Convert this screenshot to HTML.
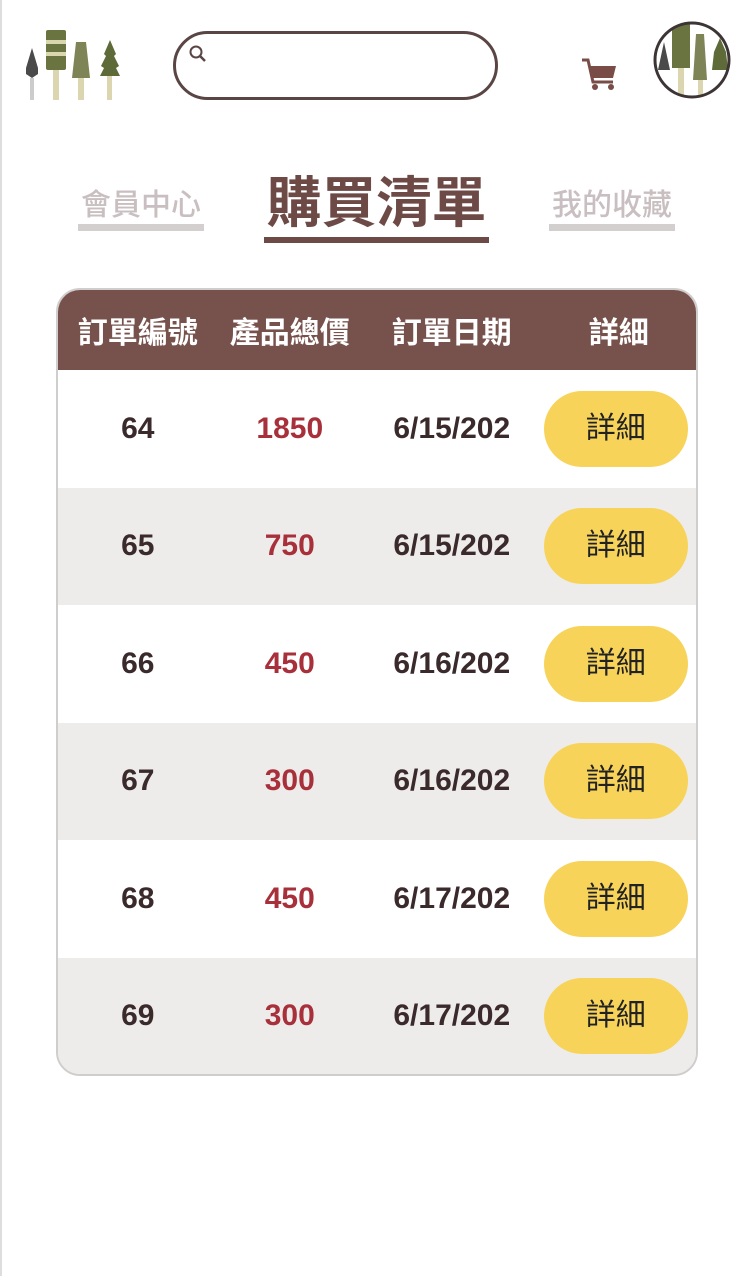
<!DOCTYPE html>
<html><head><meta charset="utf-8"><style>
*{margin:0;padding:0;box-sizing:border-box}
body{width:750px;height:1276px;background:#fff;font-family:"Liberation Sans","Noto Sans CJK TC",sans-serif;position:relative;overflow:hidden}
.abs{position:absolute}
.search{left:173px;top:31px;width:325px;height:69px;border:3px solid #5a4545;border-radius:35px}
.tab{position:absolute;text-align:center;color:#c9bfc0;font-size:30px;font-weight:500;line-height:36px}
.tab .bar{height:7px;background:#d3cfcf;margin-top:0px}
.table{left:56px;top:288px;width:642px;height:788px;border:2px solid #d0cdcd;border-radius:24px;overflow:hidden;background:#fff}
.head{height:80px;background:#77524c;display:flex;align-items:center;color:#fff;font-size:30px;font-weight:bold}
.row{height:117.5px;display:flex;align-items:center;font-size:30px;font-weight:bold;color:#3a2a2c}
.c1{width:160px;text-align:center}
.c2{width:145px;text-align:center}
.c3{width:180px;text-align:center}
.c4{width:155px;text-align:center}
.red{color:#a8303a}
.btn{display:inline-block;width:144px;height:76px;line-height:76px;border-radius:38px;background:#f7d35a;color:#222;font-weight:normal;font-size:30px;margin-left:-6px}
</style></head><body>
<div class="abs" style="left:0;top:0;width:2px;height:1276px;background:#ddd"></div>
<svg class="abs" style="left:20px;top:28px" width="106" height="74" viewBox="0 0 106 74">
<path d="M12 20 L18 40 L18 46 L12 50 L6 46 L6 40Z" fill="#4a4a4a"/><rect x="10" y="50" width="4" height="22" fill="#ccc"/>
<rect x="26" y="2" width="20" height="40" rx="2" fill="#6a7440"/><rect x="26" y="12" width="20" height="4" fill="#d9d6b0"/><rect x="26" y="24" width="20" height="4" fill="#d9d6b0"/><rect x="33" y="42" width="6" height="30" fill="#dcd6b0"/>
<path d="M56 14 L66 14 L70 50 L52 50Z" fill="#7f8456"/><rect x="58" y="50" width="6" height="22" fill="#dcd6b0"/>
<path d="M90 12 L96 26 L94 28 L99 38 L96 40 L100 48 L80 48 L84 40 L81 38 L86 28 L84 26Z" fill="#5e6a38"/><rect x="87" y="48" width="5" height="24" fill="#dcd6b0"/>
</svg>
<div class="abs search"></div>
<svg class="abs" style="left:188px;top:44px" width="22" height="22" viewBox="0 0 22 22"><circle cx="8" cy="8" r="5.5" fill="none" stroke="#5a4545" stroke-width="2"/><path d="M12 12 L17 17" stroke="#5a4545" stroke-width="2.5"/></svg>
<svg class="abs" style="left:580px;top:56px" width="40" height="38" viewBox="0 0 40 38"><path d="M2 4 L8 4 L13 26 L33 26" fill="none" stroke="#7a4c48" stroke-width="3"/><path d="M9 10 L36 10 L33 22 L12 22Z" fill="#7a4c48"/><circle cx="15" cy="31" r="3" fill="#7a4c48"/><circle cx="31" cy="31" r="3" fill="#7a4c48"/></svg>
<svg class="abs" style="left:652px;top:20px" width="80" height="80" viewBox="0 0 80 80"><defs><clipPath id="cp"><circle cx="40" cy="40" r="37"/></clipPath></defs><g clip-path="url(#cp)"><rect width="80" height="80" fill="#fff"/><path d="M12 22 L18 50 L6 50Z" fill="#4a4a4a"/><rect x="20" y="4" width="18" height="44" fill="#6a7440"/><rect x="26" y="48" width="6" height="30" fill="#dcd6b0"/><path d="M44 14 L52 14 L55 60 L41 60Z" fill="#7f8456"/><rect x="46" y="60" width="5" height="20" fill="#dcd6b0"/><path d="M68 18 L74 32 L76 50 L60 50 L62 32Z" fill="#5e6a38"/></g><circle cx="40" cy="40" r="37" fill="none" stroke="#3d3535" stroke-width="3"/></svg>
<div class="tab" style="left:78px;top:188px;width:126px">會員中心<div class="bar"></div></div>
<div class="tab" style="left:264px;top:172px;width:225px;color:#6d4a45;font-size:55px;font-weight:bold;line-height:62px">購買清單<div class="bar" style="background:#6d4a45;height:6px;margin-top:3px"></div></div>
<div class="tab" style="left:549px;top:188px;width:126px">我的收藏<div class="bar"></div></div>
<div class="abs table">
<div class="head"><div class="c1">訂單編號</div><div class="c2">產品總價</div><div class="c3">訂單日期</div><div class="c4">詳細</div></div>
<div>
<div class="row" style="background:#fff"><div class="c1">64</div><div class="c2 red">1850</div><div class="c3">6/15/202</div><div class="c4"><span class="btn">詳細</span></div></div>
<div class="row" style="background:#eeeceb"><div class="c1">65</div><div class="c2 red">750</div><div class="c3">6/15/202</div><div class="c4"><span class="btn">詳細</span></div></div>
<div class="row" style="background:#fff"><div class="c1">66</div><div class="c2 red">450</div><div class="c3">6/16/202</div><div class="c4"><span class="btn">詳細</span></div></div>
<div class="row" style="background:#eeeceb"><div class="c1">67</div><div class="c2 red">300</div><div class="c3">6/16/202</div><div class="c4"><span class="btn">詳細</span></div></div>
<div class="row" style="background:#fff"><div class="c1">68</div><div class="c2 red">450</div><div class="c3">6/17/202</div><div class="c4"><span class="btn">詳細</span></div></div>
<div class="row" style="background:#eeeceb"><div class="c1">69</div><div class="c2 red">300</div><div class="c3">6/17/202</div><div class="c4"><span class="btn">詳細</span></div></div>
</div>
</div>
</body></html>
